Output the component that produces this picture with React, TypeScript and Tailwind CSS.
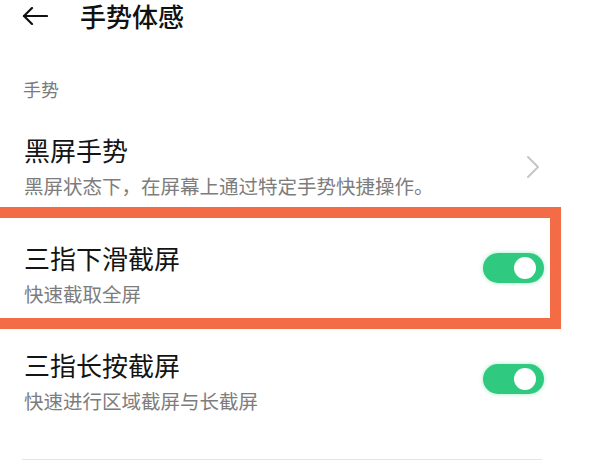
export default function App() {
  const font = { fontFamily: '"Noto Sans CJK SC", "Noto Sans", sans-serif' };

  const Toggle = () => (
    <div className="flex h-[30px] w-[61px] shrink-0 items-center justify-end rounded-full bg-[#2fca7f] pr-[8px] shadow-[0_0_4px_rgba(46,204,128,0.45)]">
      <div className="h-[22px] w-[22px] rounded-full bg-white" />
    </div>
  );

  return (
    <div className="h-[472px] w-[595px] overflow-hidden bg-white" style={font}>
      {/* Header */}
      <div className="flex h-[32px] items-center pl-[22px]">
        <svg width="26" height="18" viewBox="0 0 26 18" fill="none" stroke="#111" strokeWidth="2.2" strokeLinecap="round" strokeLinejoin="round">
          <path d="M25 9H2" />
          <path d="M10 1L2 9l8 8" />
        </svg>
        <h1 className="ml-[32px] text-[26px] leading-[32px] font-medium text-[#111]">手势体感</h1>
      </div>

      <p className="mt-[45px] pl-[23px] text-[18px] leading-[24px] text-[#7b7b7b]">手势</p>

      {/* 黑屏手势 */}
      <div className="mt-[33px] flex items-center justify-between pl-[24px] pr-[55px]">
        <div className="flex flex-col">
          <span className="text-[26px] leading-[32px] text-[#141414]">黑屏手势</span>
          <span className="mt-[7px] text-[19.5px] leading-[26px] text-[#7d7d7d]">黑屏状态下，在屏幕上通过特定手势快捷操作。</span>
        </div>
        <svg width="14" height="24" viewBox="0 0 14 24" fill="none" stroke="#c6c6c6" strokeWidth="2" strokeLinecap="round" strokeLinejoin="round">
          <path d="M2 2l10 10L2 22" />
        </svg>
      </div>

      {/* Highlighted row */}
      <div className="mt-[8px] w-[561px] border-y-[11px] border-r-[11px] border-[#f36c45] pl-[24px] pr-[6px] pt-[24px] pb-[11px]">
        <div className="flex items-start justify-between">
          <div className="flex flex-col">
            <span className="text-[26px] leading-[32px] text-[#141414]">三指下滑截屏</span>
            <span className="mt-[7px] text-[19.5px] leading-[26px] text-[#7d7d7d]">快速截取全屏</span>
          </div>
          <div className="mt-[11px]">
            <Toggle />
          </div>
        </div>
      </div>

      {/* 三指长按截屏 */}
      <div className="mt-[20px] flex items-start justify-between pl-[24px] pr-[51px]">
        <div className="flex flex-col">
          <span className="text-[26px] leading-[32px] text-[#141414]">三指长按截屏</span>
          <span className="mt-[7px] text-[19.5px] leading-[26px] text-[#7d7d7d]">快速进行区域截屏与长截屏</span>
        </div>
        <div className="mt-[15px]">
          <Toggle />
        </div>
      </div>

      <div className="ml-[22px] mt-[45px] h-px w-[520px] bg-[#e4e4e4]" />
    </div>
  );
}
